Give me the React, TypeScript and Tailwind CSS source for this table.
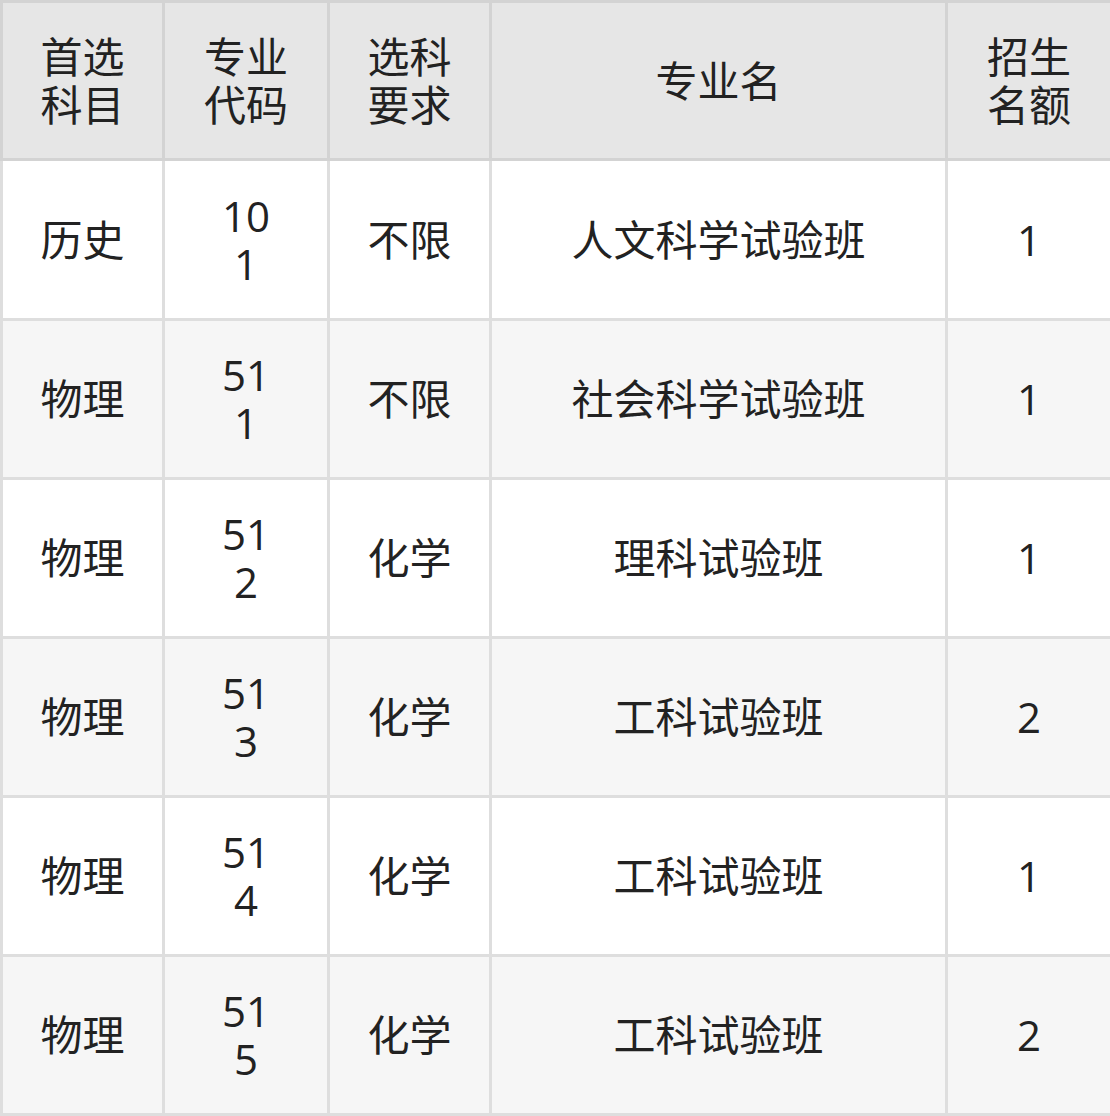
import React from 'react';

type Row = { subject: string; code: [string, string]; req: string; name: string; quota: string };

const rows: Row[] = [
  { subject: '历史', code: ['10', '1'], req: '不限', name: '人文科学试验班', quota: '1' },
  { subject: '物理', code: ['51', '1'], req: '不限', name: '社会科学试验班', quota: '1' },
  { subject: '物理', code: ['51', '2'], req: '化学', name: '理科试验班', quota: '1' },
  { subject: '物理', code: ['51', '3'], req: '化学', name: '工科试验班', quota: '2' },
  { subject: '物理', code: ['51', '4'], req: '化学', name: '工科试验班', quota: '1' },
  { subject: '物理', code: ['51', '5'], req: '化学', name: '工科试验班', quota: '2' },
];

const th = 'border-[3px] border-[#d3d3d3] bg-[#e6e6e6] font-normal text-center align-middle';
const td = 'border-[3px] border-[#dedede] text-center align-middle';

export default function App() {
  return (
    <div
      className="w-[1110px] h-[1116px] bg-white text-[#222] text-[42px] leading-[48px]"
      style={{ fontFamily: '"Open Sans", "Noto Sans CJK SC", sans-serif' }}
    >
      <table className="w-[1110px] table-fixed border-collapse">
        <colgroup>
          <col className="w-[162px]" />
          <col className="w-[165px]" />
          <col className="w-[162px]" />
          <col className="w-[456px]" />
          <col className="w-[165px]" />
        </colgroup>
        <thead>
          <tr className="h-[158px]">
            <th className={th}>首选<br />科目</th>
            <th className={th}>专业<br />代码</th>
            <th className={th}>选科<br />要求</th>
            <th className={th}>专业名</th>
            <th className={th}>招生<br />名额</th>
          </tr>
        </thead>
        <tbody>
          {rows.map((r, i) => (
            <tr key={i} className={`${i === 0 ? 'h-[160px]' : 'h-[159px]'} ${i % 2 === 1 ? 'bg-[#f6f6f6]' : 'bg-white'}`}>
              <td className={td}>{r.subject}</td>
              <td className={td}>{r.code[0]}<br />{r.code[1]}</td>
              <td className={td}>{r.req}</td>
              <td className={td}>{r.name}</td>
              <td className={td}>{r.quota}</td>
            </tr>
          ))}
        </tbody>
      </table>
    </div>
  );
}
